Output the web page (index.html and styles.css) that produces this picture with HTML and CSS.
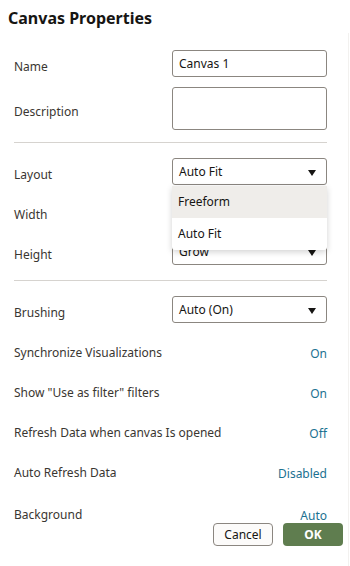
FILE: index.html
```html
<!DOCTYPE html>
<html>
<head>
  <meta charset="UTF-8">
  <title>Canvas Properties</title>
  <link rel="stylesheet" href="styles.css">
</head>
<body>
  <div class="panel">
    <h1 class="title">Canvas Properties</h1>
    <div class="form">
      <div class="row">
        <span class="label">Name</span>
        <div class="field">Canvas 1</div>
      </div>
      <div class="row row-desc">
        <span class="label">Description</span>
        <div class="field field-area"></div>
      </div>
      <div class="divider"></div>
      <div class="row">
        <span class="label">Layout</span>
        <div class="control">
          <div class="field select">Auto Fit<span class="caret"></span></div>
          <ul class="menu">
            <li class="hover">Freeform</li>
            <li>Auto Fit</li>
          </ul>
        </div>
      </div>
      <div class="row row-gap">
        <span class="label">Width</span>
        <div class="field select"></div>
      </div>
      <div class="row row-gap">
        <span class="label">Height</span>
        <div class="field select">Grow<span class="caret"></span></div>
      </div>
      <div class="divider"></div>
      <div class="row">
        <span class="label">Brushing</span>
        <div class="field select">Auto (On)<span class="caret"></span></div>
      </div>
      <div class="line line-first">
        <span class="label">Synchronize Visualizations</span>
        <a href="javascript:;" class="value">On</a>
      </div>
      <div class="line">
        <span class="label">Show "Use as filter" filters</span>
        <a href="javascript:;" class="value">On</a>
      </div>
      <div class="line">
        <span class="label">Refresh Data when canvas Is opened</span>
        <a href="javascript:;" class="value">Off</a>
      </div>
      <div class="line">
        <span class="label">Auto Refresh Data</span>
        <a href="javascript:;" class="value">Disabled</a>
      </div>
      <div class="line line-last">
        <span class="label">Background</span>
        <a href="javascript:;" class="value">Auto</a>
      </div>
    </div>
    <div class="footer">
      <button class="btn btn-cancel">Cancel</button>
      <button class="btn btn-ok">OK</button>
    </div>
  </div>
</body>
</html>
```

FILE: styles.css
```css
* {
  margin: 0;
  padding: 0;
  box-sizing: border-box;
}
body {
  font-family: "Noto Sans", "Liberation Sans", sans-serif;
  font-size: 12px;
  color: #161513;
  background: #fff;
}
a {
  text-decoration: none;
}
.panel {
  position: relative;
  width: 350px;
  height: 566px;
}
.panel::after {
  content: "";
  position: absolute;
  top: 33px;
  bottom: 0;
  right: 1px;
  width: 1px;
  background: #f2f1ef;
}
.title {
  padding: 8px 0 0 8px;
  height: 28px;
  font-size: 16px;
  line-height: 20px;
  font-weight: 700;
  color: #161513;
}
.form {
  padding: 22px 23px 0 14px;
}
.row {
  display: flex;
  justify-content: space-between;
  align-items: center;
}
.row-desc {
  margin-top: 10px;
}
.row-gap {
  margin-top: 13px;
}
.label {
  padding-top: 7px;
  line-height: 16px;
  color: #3a3631;
}
.control {
  position: relative;
}
.field {
  position: relative;
  width: 155px;
  height: 27px;
  padding: 0 6px;
  border: 1px solid #8b8680;
  border-radius: 3px;
  line-height: 25px;
  font-size: 12px;
  color: #161513;
  background: #fff;
}
.field-area {
  height: 43px;
}
.caret {
  position: absolute;
  right: 10px;
  top: 11px;
  border-left: 4px solid transparent;
  border-right: 4px solid transparent;
  border-top: 6px solid #161513;
}
.menu {
  position: absolute;
  top: 28px;
  left: 0;
  width: 155px;
  list-style: none;
  background: #fff;
  box-shadow: 0 2px 6px rgba(0,0,0,0.18);
  border-radius: 0 0 3px 3px;
  z-index: 2;
}
.menu li {
  height: 32px;
  padding-left: 6px;
  line-height: 32px;
  color: #161513;
}
.menu li.hover {
  background: #efedea;
}
.divider {
  height: 1px;
  margin: 12px 0 15px 0;
  background: #d6d3cf;
}
.row + .divider {
  margin-top: 15px;
}
.row-desc + .divider {
  margin-top: 12px;
}
.line {
  display: flex;
  justify-content: space-between;
  align-items: center;
  height: 40px;
}
.line .label {
  padding-top: 0;
}
.line-first {
  margin-top: 10px;
}
.line-last {
  padding-top: 4px;
}
.value {
  color: #1b7191;
}
.footer {
  position: absolute;
  right: 7px;
  bottom: 20px;
  display: flex;
  gap: 10px;
}
.btn {
  width: 60px;
  height: 23px;
  border-radius: 4px;
  font-family: "Noto Sans", "Liberation Sans", sans-serif;
  font-size: 12px;
  cursor: pointer;
}
.btn-cancel {
  border: 1px solid #8b8680;
  background: #fcfbfa;
  color: #161513;
}
.btn-ok {
  border: none;
  background: #5f7d4f;
  color: #fff;
  font-weight: 700;
}
```
